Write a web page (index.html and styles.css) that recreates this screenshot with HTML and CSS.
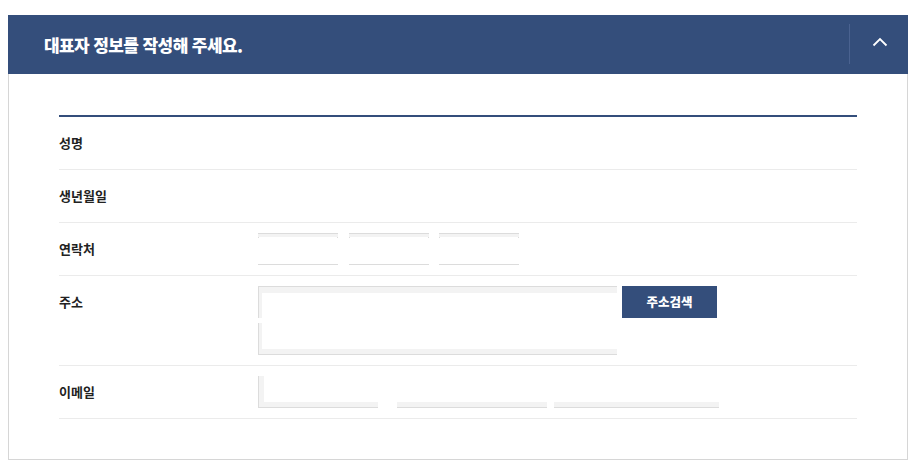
FILE: index.html
```html
<!DOCTYPE html>
<html lang="ko">
<head>
<meta charset="utf-8">
<title>대표자 정보</title>
<link rel="stylesheet" href="styles.css">
</head>
<body>
<section class="panel">
  <header class="panel-head">
    <h2 class="panel-title">대표자 정보를 작성해 주세요.</h2>
    <button class="toggle" type="button" aria-label="접기">
      <svg width="16" height="10" viewBox="0 0 16 10"><polyline points="1.5,8.5 8,2 14.5,8.5" fill="none" stroke="#fff" stroke-width="1.8"/></svg>
    </button>
  </header>
  <div class="panel-body">
    <div class="form">
      <div class="row">
        <div class="label">성명</div>
        <div class="field"></div>
      </div>
      <div class="row">
        <div class="label">생년월일</div>
        <div class="field"></div>
      </div>
      <div class="row">
        <div class="label">연락처</div>
        <div class="field phones">
          <div class="inp phone"></div>
          <div class="inp phone p2"></div>
          <div class="inp phone p3"></div>
        </div>
      </div>
      <div class="row">
        <div class="label">주소</div>
        <div class="field addr">
          <div class="addr-line">
            <div class="inp addr1"></div>
            <button class="search" type="button">주소검색</button>
          </div>
          <div class="inp addr2"></div>
        </div>
      </div>
      <div class="row">
        <div class="label">이메일</div>
        <div class="field emails">
          <div class="inp mail1"></div>
          <div class="inp mail2"></div>
          <div class="inp mail3"></div>
        </div>
      </div>
    </div>
  </div>
</section>
</body>
</html>
```
FILE: styles.css
```css
* { box-sizing: border-box; }
body {
  margin: 0;
  padding: 15px 0 0 8px;
  background: #fff;
  font-family: "Noto Sans CJK KR", "Noto Sans", sans-serif;
}
.panel { width: 900px; }
.panel-head {
  height: 59px;
  background: #344e7b;
  display: flex;
  align-items: center;
  justify-content: space-between;
  padding-left: 36px;
}
.panel-title {
  margin: 0;
  color: #fff;
  font-size: 17px;
  font-weight: 900;
  letter-spacing: -0.6px;
}
.toggle {
  width: 59px;
  height: 40px;
  margin-bottom: 1px;
  border: 0;
  border-left: 1px solid #4a6290;
  background: transparent;
  padding: 0 0 4px 2px;
  display: flex;
  align-items: center;
  justify-content: center;
}
.panel-body {
  border: 1px solid #d6d6d6;
  border-top: 0;
  padding: 41px 50px 40px 50px;
}
.form { border-top: 2px solid #344e7b; }
.row {
  display: flex;
  align-items: flex-start;
  padding: 10px 0;
  border-bottom: 1px solid #ebebeb;
}
.label {
  width: 199px;
  height: 32px;
  line-height: 31px;
  font-size: 13px;
  font-weight: 700;
  color: #222;
}
.field { min-height: 32px; display: flex; }
.addr { flex-direction: column; gap: 5px; }
.addr-line { display: flex; gap: 5px; }

.inp {
  height: 32px;
  background-repeat: no-repeat;
}
.phone {
  width: 80px;
  border-top: 1px solid #dcdcdc;
  border-bottom: 1px solid #dcdcdc;
  box-shadow: inset 0 3px 0 #f3f3f3;
  background-image: linear-gradient(#dcdcdc, #dcdcdc), linear-gradient(#dcdcdc, #dcdcdc);
  background-size: 1px 4px, 1px 4px;
  background-position: left top, right top;
}
.p2 { margin-left: 11px; }
.p3 { margin-left: 10px; }

.addr1 {
  width: 359px;
  border-top: 1px solid #dcdcdc;
  border-left: 1px solid #dcdcdc;
  box-shadow: inset 0 6px 0 #f3f3f3, inset 3px 0 0 #f3f3f3;
  background-image: linear-gradient(#dcdcdc, #dcdcdc);
  background-size: 1px 6px;
  background-position: right top;
}
.addr2 {
  width: 359px;
  border-left: 1px solid #dcdcdc;
  border-bottom: 1px solid #dcdcdc;
  box-shadow: inset 0 -5px 0 #f3f3f3, inset 3px 0 0 #f3f3f3;
  background-image: linear-gradient(#dcdcdc, #dcdcdc), linear-gradient(#dcdcdc, #dcdcdc);
  background-size: 1px 5px, 3px 1px;
  background-position: right bottom, left top;
}
.search {
  width: 95px;
  height: 32px;
  border: 0;
  background: #344e7b;
  color: #fff;
  font-family: inherit;
  font-size: 12.5px;
  font-weight: 900;
  padding: 0 0 1px;
}

.emails { align-items: flex-start; }
.mail1, .mail2, .mail3 {
  border-bottom: 1px solid #dcdcdc;
  background-image: linear-gradient(#dcdcdc, #dcdcdc), linear-gradient(#dcdcdc, #dcdcdc);
  background-size: 1px 5px, 1px 5px;
  background-position: left bottom, right bottom;
}
.mail1 {
  width: 120px;
  border-left: 1px solid #dcdcdc;
  box-shadow: inset 0 -5px 0 #f3f3f3, inset 5px 0 0 #f3f3f3;
  background-image: linear-gradient(#dcdcdc, #dcdcdc), linear-gradient(#dcdcdc, #dcdcdc);
  background-size: 5px 1px, 1px 5px;
  background-position: left top, right bottom;
}
.mail2 {
  width: 150px;
  margin-left: 19px;
  box-shadow: inset 0 -5px 0 #f3f3f3;
}
.mail3 {
  width: 165px;
  margin-left: 7px;
  box-shadow: inset 0 -5px 0 #f3f3f3;
}
```
